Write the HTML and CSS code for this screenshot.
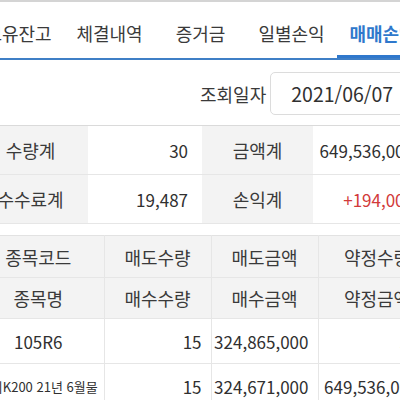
FILE: index.html
```html
<!DOCTYPE html>
<html lang="ko">
  <head>
    <meta charset="UTF-8" />
    <meta name="viewport" content="width=device-width, initial-scale=1.0" />
    <title>매매손익</title>
    <link rel="stylesheet" href="styles.css">
  </head>
  <body>
    <div class="page">
      <!-- Tab bar -->
      <div class="tabs">
        <div class="tab">보유잔고</div>
        <div class="tab">체결내역</div>
        <div class="tab">증거금</div>
        <div class="tab">일별손익</div>
        <div class="tab active">매매손익</div>
      </div>

      <!-- Search row -->
      <div class="search">
        <span class="search-label">조회일자</span>
        <div class="date-box">2021/06/07</div>
      </div>

      <!-- Summary -->
      <table class="summary">
        <colgroup>
          <col style="width: 115px" />
          <col style="width: 114px" />
          <col style="width: 111px" />
          <col style="width: 115px" />
        </colgroup>
        <tr>
          <th>수량계</th>
          <td>30</td>
          <th>금액계</th>
          <td>649,536,000</td>
        </tr>
        <tr>
          <th>수수료계</th>
          <td>19,487</td>
          <th>손익계</th>
          <td class="plus">+194,000</td>
        </tr>
      </table>

      <!-- Trade list -->
      <table class="grid">
        <colgroup>
          <col style="width: 131px" />
          <col style="width: 107px" />
          <col style="width: 107px" />
          <col style="width: 118px" />
          <col style="width: 110px" />
        </colgroup>
        <tr class="head first">
          <th>종목코드</th>
          <th>매도수량</th>
          <th>매도금액</th>
          <th>약정수량</th>
          <th>수수료</th>
        </tr>
        <tr class="head">
          <th>종목명</th>
          <th>매수수량</th>
          <th>매수금액</th>
          <th>약정금액</th>
          <th>손익</th>
        </tr>
        <tr>
          <td class="name">105R6</td>
          <td>15</td>
          <td>324,865,000</td>
          <td class="wide">30</td>
          <td>19,487</td>
        </tr>
        <tr>
          <td class="name small">미니K200 21년 6월물</td>
          <td>15</td>
          <td>324,671,000</td>
          <td class="wide">649,536,000</td>
          <td class="plus">+194,000</td>
        </tr>
      </table>
    </div>
  </body>
</html>
```

FILE: styles.css
```css
/* Page base */
body,
html {
  margin: 0;
  padding: 0;
  background-color: white;
  overflow: hidden;
  font-family: 'Noto Sans CJK KR', 'Noto Sans', sans-serif;
  color: #303030;
}

/* Content is scrolled a little to the right */
.page {
  width: 520px;
  margin-left: -27px;
}

/* Tab bar */
.tabs {
  display: flex;
  border-top: 2px solid #d4d4d4;
  border-bottom: 2px solid #3f7fc6;
}

.tab {
  flex: 0 0 91px;
  height: 56px;
  display: flex;
  justify-content: center;
  align-items: center;
  padding-top: 6px;
  box-sizing: border-box;
  font-size: 18px;
  color: #3a3a3a;
  white-space: nowrap;
}

.tab.active {
  color: #2f78cc;
  font-weight: bold;
  box-shadow: inset 0 -3px 0 #2f78cc;
}

/* Search row */
.search {
  display: flex;
  align-items: center;
  gap: 4px;
  padding: 12px 0 10px 227px;
}

.search-label {
  font-size: 18px;
  color: #3a3a3a;
}

.date-box {
  width: 140px;
  height: 43px;
  box-sizing: border-box;
  border: 1px solid #dcdcdc;
  border-radius: 5px;
  display: flex;
  align-items: center;
  padding-left: 20px;
  font-size: 19.5px;
  color: #303030;
}

/* Summary table */
.summary {
  border-collapse: collapse;
  table-layout: fixed;
  width: 455px;
  border-top: 1px solid #dadada;
  border-bottom: 1px solid #e2e2e2;
}

.summary th,
.summary td {
  height: 48px;
  padding: 0;
  font-size: 17px;
  border-bottom: 1px solid #e6e6e6;
}

.summary th {
  background-color: #f3f3f3;
  font-weight: normal;
  font-size: 18px;
  color: #3a3a3a;
  text-align: center;
}

.summary td {
  text-align: right;
  padding-right: 14px;
}

.plus {
  color: #d23a3a;
}

/* Trade list */
.grid {
  margin-top: 11px;
  border-collapse: collapse;
  table-layout: fixed;
  width: 573px;
  border-top: 1px solid #e2e2e2;
}

.grid th,
.grid td {
  padding: 0;
  font-size: 17px;
  white-space: nowrap;
  overflow: hidden;
  border-bottom: 1px solid #e6e6e6;
  border-left: 1px solid #e6e6e6;
}

.grid th:first-child,
.grid td:first-child {
  border-left: none;
}

.grid .head th {
  height: 40px;
  background-color: #f3f3f3;
  font-weight: normal;
  font-size: 18px;
  color: #3a3a3a;
  text-align: center;
}

.grid .head.first th {
  height: 41px;
}

.grid td {
  height: 44px;
  text-align: right;
  padding-right: 9px;
}

.grid td.wide {
  padding-right: 17px;
}

.grid td.name {
  text-align: center;
  padding-right: 0;
  overflow: visible;
}

.grid td.small {
  font-size: 13px;
}
```
